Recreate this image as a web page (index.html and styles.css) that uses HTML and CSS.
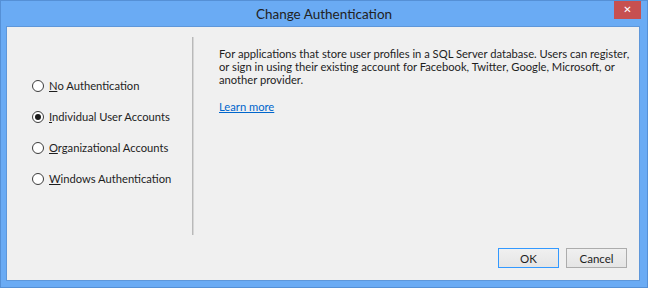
FILE: index.html
```html
<!DOCTYPE html>
<html lang="en">
<head>
    <meta charset="UTF-8">
    <title>Change Authentication</title>
    <link rel="stylesheet" href="styles.css">
</head>
<body>
    <div class="window">
        <div class="titlebar">
            Change Authentication
            <span class="close">&#x2715;</span>
        </div>

        <div class="client">
            <div class="content">
                <div class="options">
                    <label class="option"><span class="radio"></span><span><u>N</u>o Authentication</span></label>
                    <label class="option"><span class="radio checked"></span><span><u>I</u>ndividual User Accounts</span></label>
                    <label class="option"><span class="radio"></span><span><u>O</u>rganizational Accounts</span></label>
                    <label class="option"><span class="radio"></span><span><u>W</u>indows Authentication</span></label>
                </div>
                <div class="separator"></div>
                <div class="details">
                    <p>
                        For applications that store user profiles in a SQL Server database. Users can register,<br>
                        or sign in using their existing account for Facebook, Twitter, Google, Microsoft, or<br>
                        another provider.
                    </p>
                    <a href="#" class="learn">Learn more</a>
                </div>
            </div>

            <div class="footer">
                <button class="btn default">OK</button>
                <button class="btn">Cancel</button>
            </div>
        </div>
    </div>
</body>
</html>
```

FILE: styles.css
```css
* {
    margin: 0;
    padding: 0;
    box-sizing: border-box;
}

body {
    font-family: Lato, "Open Sans", sans-serif;
    font-size: 11.2px;
    color: #1e1e1e;
    background: #6aabf4;
}

.window {
    width: 648px;
    height: 288px;
    display: flex;
    flex-direction: column;
    background: #6aabf4;
    border: 1px solid #5590d6;
}

.titlebar {
    position: relative;
    height: 25px;
    line-height: 26px;
    text-align: center;
    font-size: 13.5px;
    color: #222;
}

.close {
    position: absolute;
    top: 0;
    right: 6px;
    width: 27px;
    height: 18px;
    line-height: 18px;
    background: #c75050;
    color: #fff;
    font-family: "DejaVu Sans", sans-serif;
    font-size: 10px;
    font-weight: bold;
    text-align: center;
}

.client {
    flex: 1;
    display: flex;
    flex-direction: column;
    margin: 0 7px 6px 5px;
    padding-top: 10px;
    background: #f0f0f0;
    border: 1px solid #5e97da;
}

.content {
    display: flex;
    height: 198px;
}

.options {
    flex: none;
    width: 185px;
    padding: 33px 0 0 25px;
}

.option {
    display: flex;
    align-items: center;
    gap: 5px;
    height: 31px;
    white-space: nowrap;
}

.radio {
    flex: none;
    width: 12px;
    height: 12px;
    border: 1px solid #3c3c3c;
    border-radius: 50%;
    background: #fff;
    display: flex;
    align-items: center;
    justify-content: center;
}

.radio.checked::after {
    content: "";
    width: 6px;
    height: 6px;
    border-radius: 50%;
    background: #1a1a1a;
}

.separator {
    flex: none;
    width: 2px;
    background: #b9b9b9;
    border-right: 1px solid #d6d6d6;
}

.details {
    flex: 1;
    padding: 10px 0 0 25px;
    line-height: 13px;
    white-space: nowrap;
}

.details p {
    margin-bottom: 14px;
}

.learn {
    color: #0066cc;
}

.footer {
    display: flex;
    justify-content: flex-end;
    gap: 7px;
    margin-top: 13px;
    padding-right: 12px;
}

.btn {
    width: 61px;
    height: 20px;
    font-family: inherit;
    font-size: 11.5px;
    color: #1e1e1e;
    background: linear-gradient(to bottom, #f0f0f0, #e5e5e5);
    border: 1px solid #acacac;
}

.btn.default {
    border-color: #3399ff;
}
```
